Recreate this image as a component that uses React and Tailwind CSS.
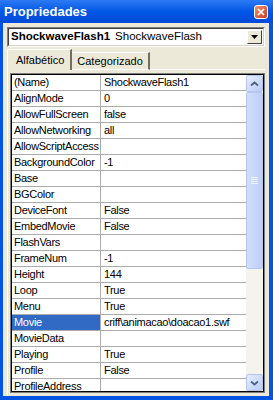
import React from "react";

const rows = [
  ["(Name)", "ShockwaveFlash1"],
  ["AlignMode", "0"],
  ["AllowFullScreen", "false"],
  ["AllowNetworking", "all"],
  ["AllowScriptAccess", ""],
  ["BackgroundColor", "-1"],
  ["Base", ""],
  ["BGColor", ""],
  ["DeviceFont", "False"],
  ["EmbedMovie", "False"],
  ["FlashVars", ""],
  ["FrameNum", "-1"],
  ["Height", "144"],
  ["Loop", "True"],
  ["Menu", "True"],
  ["Movie", "criff\\animacao\\doacao1.swf"],
  ["MovieData", ""],
  ["Playing", "True"],
  ["Profile", "False"],
  ["ProfileAddress", ""],
];

function ScrollButton({ down }) {
  return (
    <div className="h-[17px] w-[17px] shrink-0 rounded-[2px] border border-[#B4C6F0] bg-gradient-to-br from-[#E6EEFE] to-[#B9CCF6] flex items-center justify-center">
      <svg width="9" height="6" viewBox="0 0 9 6">
        <path
          d={down ? "M1 1.5 L4.5 4.5 L8 1.5" : "M1 4.5 L4.5 1.5 L8 4.5"}
          fill="none"
          stroke="#4D6185"
          strokeWidth="1.8"
        />
      </svg>
    </div>
  );
}

export default function App() {
  return (
    <div
      className="w-[273px] h-[400px] flex flex-col bg-[#0054E3] overflow-hidden"
      style={{ fontFamily: '"Liberation Sans", Arial, sans-serif' }}
    >
      {/* Title bar */}
      <div className="h-[23px] shrink-0 flex items-center justify-between pl-[4px] pr-[5px] bg-gradient-to-b from-[#2C7AF4] via-[#0056E6] to-[#004AD8]">
        <span className="text-white font-bold text-[13px] leading-none">Propriedades</span>
        <div className="w-[14px] h-[14px] rounded-[3px] border border-white bg-gradient-to-br from-[#EE9274] to-[#C8391A] flex items-center justify-center">
          <svg width="8" height="8" viewBox="0 0 8 8">
            <path d="M1 1 L7 7 M7 1 L1 7" stroke="white" strokeWidth="1.7" />
          </svg>
        </div>
      </div>

      {/* Body */}
      <div className="flex-1 min-h-0 flex flex-col bg-[#ECE9D8] ml-[3px] mr-[4px] mb-[4px] px-[4px] pt-[4px]">
        {/* Combo */}
        <div className="h-[20px] shrink-0 flex border-t border-l border-[#808080] border-b border-r border-b-white border-r-white">
          <div className="flex-1 flex items-center bg-white border-t border-l border-[#404040] border-b border-r border-b-[#D4D0C8] border-r-[#D4D0C8] pl-[2px] pr-[1px]">
            <span className="flex-1 text-[11.5px] leading-none text-black whitespace-nowrap">
              <b>ShockwaveFlash1</b>
              <span className="ml-[5px]">ShockwaveFlash</span>
            </span>
            <div className="w-[15px] h-[14px] bg-[#ECE9D8] border-t border-l border-white border-b border-r border-b-[#404040] border-r-[#404040] flex items-center justify-center">
              <svg width="7" height="4" viewBox="0 0 7 4">
                <path d="M0 0 L7 0 L3.5 4 Z" fill="black" />
              </svg>
            </div>
          </div>
        </div>

        {/* Tabs */}
        <div className="h-[21px] mt-[2px] shrink-0 flex items-end text-[11px] text-black">
          <div className="h-[21px] pl-[8px] pr-[6px] flex items-center border-t border-l border-white border-r-2 border-r-[#716F64] -mr-[1px] relative z-10 rounded-tl-[2px]">
            Alfabético
          </div>
          <div className="h-[18px] pl-[5px] pr-[5px] flex items-center border-t border-l border-white border-r-2 border-r-[#716F64] border-b border-b-white">
            Categorizado
          </div>
          <div className="flex-1 border-b border-white" />
        </div>

        {/* Tab panel */}
        <div className="flex-1 min-h-0 flex flex-col border-l border-white pt-[3px] pl-[2px]">
          <div className="flex-1 min-h-0 mb-[3px] border border-[#808080]">
            <div className="h-full flex border border-black bg-white">
              <div className="flex-1 min-w-0 overflow-hidden">
                {rows.map(([name, value]) => {
                  const sel = name === "Movie";
                  return (
                    <div key={name} className="h-[16px] flex border-b border-[#ACACAC] text-[11px] leading-[15px] tracking-[-0.3px]">
                      <div
                        className={
                          sel
                            ? "w-[89px] shrink-0 pl-[2px] border-r border-[#ACACAC] bg-[#316AC5] text-white whitespace-nowrap overflow-hidden"
                            : "w-[89px] shrink-0 pl-[2px] border-r border-[#ACACAC] text-black whitespace-nowrap overflow-hidden"
                        }
                      >
                        {name}
                      </div>
                      <div className="flex-1 pl-[3px] text-black whitespace-nowrap overflow-hidden">{value}</div>
                    </div>
                  );
                })}
              </div>

              {/* Scrollbar */}
              <div className="w-[17px] shrink-0 flex flex-col bg-[#F4F3EE]">
                <ScrollButton />
                <div className="h-[177px] shrink-0 rounded-[2px] border border-[#B4C6F0] bg-gradient-to-r from-[#D2DEFC] to-[#BDCFF8] flex items-center justify-center">
                  <div className="flex flex-col gap-[1px]">
                    <div className="w-[7px] h-[1px] bg-[#EEF3FE]" />
                    <div className="w-[7px] h-[1px] bg-[#EEF3FE]" />
                    <div className="w-[7px] h-[1px] bg-[#EEF3FE]" />
                    <div className="w-[7px] h-[1px] bg-[#EEF3FE]" />
                  </div>
                </div>
                <div className="flex-1" />
                <ScrollButton down />
              </div>
            </div>
          </div>
        </div>
      </div>
    </div>
  );
}
